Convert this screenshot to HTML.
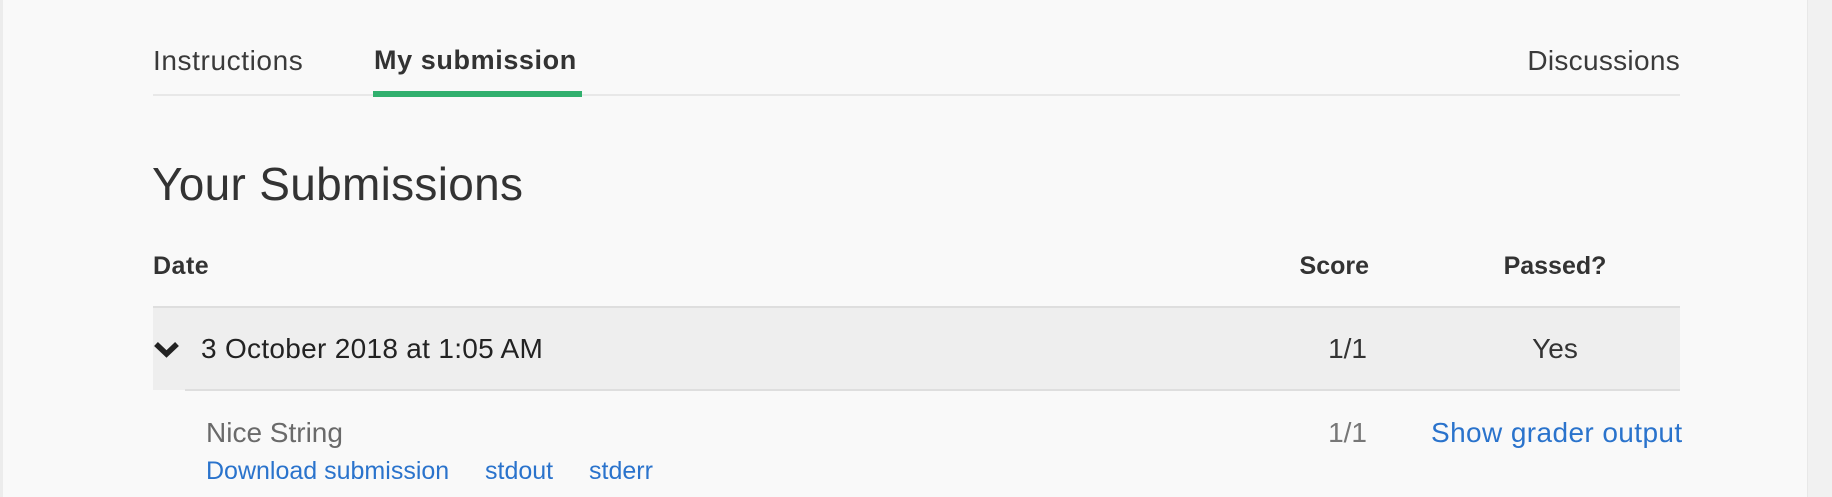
<!DOCTYPE html>
<html><head><meta charset="utf-8"><style>
body{margin:0;width:1832px;height:497px;background:#f9f9f9;font-family:"Liberation Sans",sans-serif;color:#333;position:relative;overflow:hidden}
.a{position:absolute;white-space:nowrap;line-height:1}
.link{color:#2a73cc}
</style></head><body>
<div style="position:absolute;left:0;top:0;width:3px;height:497px;background:#ececec"></div>
<div style="position:absolute;left:1807px;top:0;width:25px;height:497px;background:#f1f1f1;border-left:1px solid #e8e8e8"></div>
<div class="a" style="left:153px;top:47px;font-size:28px;letter-spacing:0.6px;color:#3a3a3a">Instructions</div>
<div class="a" style="left:374px;top:47px;font-size:27px;letter-spacing:0.6px;font-weight:bold;color:#333">My submission</div>
<div class="a" style="right:152px;top:47px;font-size:28px;letter-spacing:0.3px;color:#3a3a3a">Discussions</div>
<div style="position:absolute;left:153px;top:94px;width:1527px;height:2px;background:#e8e8e8"></div>
<div style="position:absolute;left:373px;top:91px;width:209px;height:6px;background:#31b06e"></div>
<div class="a" style="left:152px;top:161px;font-size:46px;letter-spacing:0.3px;color:#333">Your Submissions</div>
<div class="a" style="left:153px;top:254px;font-size:25px;letter-spacing:0.5px;font-weight:bold">Date</div>
<div class="a" style="right:463px;top:254px;font-size:25px;font-weight:bold">Score</div>
<div class="a" style="left:1455px;width:200px;text-align:center;top:254px;font-size:25px;font-weight:bold">Passed?</div>
<div style="position:absolute;left:153px;top:306px;width:1527px;height:84px;background:#eeeeee;border-top:2px solid #dedede;box-sizing:border-box"></div>
<div style="position:absolute;left:185px;top:389px;width:1495px;height:2px;background:#dedede"></div>
<svg style="position:absolute;left:153px;top:340px" width="27" height="20" viewBox="0 0 27 20"><path d="M3 4 L13.5 14 L24 4" fill="none" stroke="#222" stroke-width="5.5" stroke-linejoin="miter"/></svg>
<div class="a" style="left:201px;top:335px;font-size:28px;letter-spacing:0.3px;color:#222">3 October 2018 at 1:05 AM</div>
<div class="a" style="right:465px;top:335px;font-size:28px;color:#333">1/1</div>
<div class="a" style="left:1455px;width:200px;text-align:center;top:335px;font-size:28px;color:#333">Yes</div>
<div class="a" style="left:206px;top:419px;font-size:28px;color:#6a6a6a">Nice String</div>
<div class="a" style="right:465px;top:419px;font-size:28px;color:#777">1/1</div>
<div class="a link" style="left:1431px;top:419px;font-size:28px;letter-spacing:0.4px">Show grader output</div>
<div class="a link" style="left:206px;top:459px;font-size:25px">Download submission</div>
<div class="a link" style="left:485px;top:459px;font-size:25px">stdout</div>
<div class="a link" style="left:589px;top:459px;font-size:25px">stderr</div>
</body></html>
